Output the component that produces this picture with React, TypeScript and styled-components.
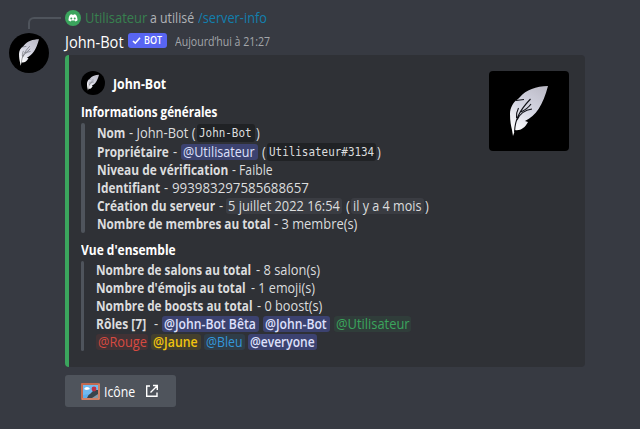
import React from 'react';
import styled, { createGlobalStyle, css } from 'styled-components';

const Global = createGlobalStyle`
  body {
    margin: 0;
    background: #373a42;
    font-family: "Open Sans", "Noto Sans", sans-serif;
    color: #dcddde;
  }
`;

/* A stretch of text: w is its width in the line, s narrows the letters (percent). */
const RunBox = styled.span<{ $w: number; $gap: number }>`
  flex: none;
  width: ${p => p.$w}px;
  margin-right: ${p => p.$gap}px;
  white-space: nowrap;
`;
const Narrow = styled.span<{ $s: number }>`
  display: inline-block;
  transform: scaleX(${p => p.$s / 100});
  transform-origin: 0 50%;
`;
type RunProps = { w: number; s?: number; gap?: number; className?: string; children?: React.ReactNode };
const Run = ({ w, s = 92, gap = 0, className, children }: RunProps) => (
  <RunBox className={className} $w={w} $gap={gap}>
    <Narrow $s={s}>{children}</Narrow>
  </RunBox>
);
const Strong = styled(Run)`
  font-weight: 700;
`;

const Page = styled.main`
  box-sizing: border-box;
  width: 640px;
  height: 429px;
  padding: 9px 0 0 9px;
  display: grid;
  grid-template-columns: 40px 520px;
  grid-template-rows: 20px 26px auto auto;
  column-gap: 16px;
  align-content: start;
  overflow: hidden;
`;

const Spine = styled.div`
  box-sizing: border-box;
  width: 33px;
  height: 12px;
  margin: 8px 0 0 19px;
  border: 2px solid #4f545c;
  border-width: 2px 0 0 2px;
  border-top-left-radius: 6px;
`;

const Reply = styled.div`
  display: flex;
  align-items: center;
  height: 18px;
  font-size: 14px;
  line-height: 18px;
  color: #b0b3b7;
`;
const ReplyIcon = styled.svg`
  width: 16px;
  height: 16px;
  margin-right: 4px;
`;
const ReplyUser = styled(Run)`
  color: #37804f;
`;
const Command = styled(Run)`
  color: #127fae;
`;

const Avatar = styled.svg<{ $size: number; $round?: boolean }>`
  display: block;
  flex: none;
  width: ${p => p.$size}px;
  height: ${p => p.$size}px;
  border-radius: ${p => (p.$round ? '50%' : '4px')};
  background: #000;
`;
const AvatarCell = styled.div`
  grid-row: 2 / 4;
  padding-top: 4px;
`;

const Header = styled.div`
  display: flex;
  align-items: center;
  height: 26px;
  line-height: 24px;
`;
const Author = styled(Run)`
  font-size: 16px;
  font-weight: 500;
  color: #fff;
`;
const Badge = styled.span`
  display: flex;
  align-items: center;
  box-sizing: border-box;
  width: 39px;
  height: 15px;
  margin: -3px 8px 0 0;
  padding-left: 4px;
  border-radius: 3px;
  background: #5865f2;
  color: #fff;
  font-size: 10px;
  font-weight: 600;
  line-height: 15px;
`;
const Tick = styled.svg`
  width: 9px;
  height: 9px;
  margin-right: 3px;
`;
const Time = styled(Run)`
  font-size: 12px;
  line-height: 26px;
  color: #a3a6aa;
`;

const Embed = styled.article`
  grid-column: 2;
  box-sizing: border-box;
  display: flex;
  justify-content: space-between;
  height: 312px;
  padding: 16px 16px 0 12px;
  border-left: 4px solid #3ba55d;
  border-radius: 4px;
  background: #2f3136;
  font-size: 14px;
`;
const Body = styled.div`
  display: flex;
  flex-direction: column;
`;
const EmbedAuthor = styled.div`
  display: flex;
  align-items: center;
  gap: 8px;
  height: 24px;
  margin-bottom: 8px;
  color: #fff;
`;
const Section = styled.section<{ $top?: number }>`
  margin-top: ${p => p.$top ?? 0}px;
`;
const Heading = styled.h3`
  margin: 0 0 2px;
  height: 18px;
  display: flex;
  font-size: 14px;
  line-height: 18px;
  color: #fff;
`;
const Quote = styled.div<{ $bar: number; $pad: number }>`
  display: grid;
  grid-template-columns: ${p => p.$bar}px auto;
  column-gap: ${p => p.$pad}px;
  &::before {
    content: '';
    border-radius: 4px;
    background: #4f545c;
  }
`;
const Lines = styled.div`
  display: flex;
  flex-direction: column;
`;
const Line = styled.div<{ $h?: number }>`
  display: flex;
  align-items: center;
  height: ${p => p.$h ?? 18}px;
  line-height: 18px;
`;

const chip = css`
  box-sizing: border-box;
  height: 16px;
  line-height: 16px;
  border-radius: 3px;
  padding-left: 2px;
`;
const Code = styled(Run)`
  ${chip}
  height: 18px;
  line-height: 18px;
  background: #202225;
  font-family: "DejaVu Sans Mono", monospace;
  font-size: 12px;
`;
const Stamp = styled(Run)`
  ${chip}
  background: #3a3c42;
`;
const tones = {
  blurple: ['#3c4270', '#dee0fc', 500],
  green: ['#303d3a', '#3ba55d', 400],
  red: ['#413235', '#d84a41', 400],
  yellow: ['#433f2e', '#f1c40f', 600],
  blue: ['#2f3d48', '#3498db', 500],
} as const;
const Mention = styled(Run)<{ $tone: keyof typeof tones; $bold?: boolean }>`
  ${chip}
  background: ${p => tones[p.$tone][0]};
  color: ${p => tones[p.$tone][1]};
  font-weight: ${p => (p.$bold ? 650 : tones[p.$tone][2])};
`;

const Button = styled.button`
  grid-column: 2;
  display: flex;
  align-items: center;
  box-sizing: border-box;
  width: 111px;
  height: 32px;
  margin-top: 8px;
  padding: 0 0 0 16px;
  border: 0;
  border-radius: 3px;
  background: #4f545c;
  color: #fff;
  font: 500 14px "Open Sans", sans-serif;
  text-align: left;
`;
const Emoji = styled.svg`
  width: 19px;
  height: 17px;
  margin-right: 4px;
`;
const External = styled.svg`
  width: 14px;
  height: 14px;
`;

const Feather = ({ size, round }: { size: number; round?: boolean }) => (
  <Avatar $size={size} $round={round} viewBox={round ? '2 3 76 76' : '0 0 80 80'}>
    <defs>
      <linearGradient id={`vane${size}`} x1="0.8" y1="0" x2="0.3" y2="1">
        <stop offset="0" stopColor="#bdbcc8" />
        <stop offset="0.5" stopColor="#d5d6e3" />
        <stop offset="1" stopColor="#fff" />
      </linearGradient>
    </defs>
    <path
      fill={`url(#vane${size})`}
      d="M59 15C47 15 37 19 31 26L29 28C24 31 21 37 21 43C21 50 22 55 23 59L24 65L26 59C31 60 36 57 39 51L36 50C47 45 54 34 59 15Z"
    />
    <path
      fill="none"
      stroke="#111218"
      strokeWidth={round ? 0.7 : 1.1}
      d="M25.5 61C26 48 31 39 41.5 28M27.5 47C27 43 28 40 29.5 37M28 49C31 42 36 39 43 38M32 41C36 39 40 36 42 33M27 29.5L35 28.5"
    />
  </Avatar>
);

export default function App() {
  return (
    <>
      <Global />
      <Page>
        <Spine />
        <Reply>
          <ReplyIcon viewBox="0 0 16 16">
            <circle cx="8" cy="8" r="8" fill="#3ba55d" />
            <path
              fill="#fff"
              d="M5 4.8Q6 4.2 6.8 4.2L7.1 4.8H8.9L9.2 4.2Q10.2 4.3 11 4.8Q12.7 7.2 12.6 10.3Q11.6 11.3 10.4 11.5L9.7 10.6H6.3L5.6 11.5Q4.4 11.3 3.4 10.3Q3.3 7.2 5 4.8Z"
            />
            <circle cx="6.3" cy="8.4" r="1" fill="#3ba55d" />
            <circle cx="9.7" cy="8.4" r="1" fill="#3ba55d" />
          </ReplyIcon>
          <ReplyUser w={61} gap={4} s={92.5}>Utilisateur</ReplyUser>
          <Run w={44} gap={4} s={88}>a utilisé</Run>
          <Command w={69} s={91}>/server-info</Command>
        </Reply>

        <AvatarCell><Feather size={40} round /></AvatarCell>
        <Header>
          <Author w={59} gap={4} s={91}>John-Bot</Author>
          <Badge>
            <Tick viewBox="0 0 9 9"><path d="M1 5L3.3 7.2L8 1.8" fill="none" stroke="#fff" strokeWidth="1.6" /></Tick>
            <Run w={19} s={90}>BOT</Run>
          </Badge>
          <Time w={96} s={88}>Aujourd’hui à 21:27</Time>
        </Header>

        <Embed>
          <Body>
            <EmbedAuthor>
              <Feather size={24} round />
              <Strong w={53} s={88}>John-Bot</Strong>
            </EmbedAuthor>
            <Section>
              <Heading><Strong w={137} s={83.5}>Informations générales</Strong></Heading>
              <Quote $bar={4} $pad={12}>
                <Lines>
                  <Line $h={19}>
                    <Strong w={28} gap={4} s={84}>Nom</Strong>
                    <Run w={68} s={92}>- John-Bot (</Run>
                    <Code w={58} gap={1} s={91}>John-Bot</Code>
                    <Run w={5}>)</Run>
                  </Line>
                  <Line $h={19}>
                    <Strong w={72} gap={4} s={84.5}>Propriétaire</Strong>
                    <Run w={8}>-</Run>
                    <Mention $tone="blurple" w={77} gap={4} s={89.5}>@Utilisateur</Mention>
                    <Run w={5}>(</Run>
                    <Code w={109} gap={1} s={91}>Utilisateur#3134</Code>
                    <Run w={5}>)</Run>
                  </Line>
                  <Line>
                    <Strong w={131} gap={4} s={85}>Niveau de vérification</Strong>
                    <Run w={42} s={87}>- Faible</Run>
                  </Line>
                  <Line>
                    <Strong w={63} gap={4} s={84.5}>Identifiant</Strong>
                    <Run w={8}>-</Run>
                    <Run w={138} s={95}>993983297585688657</Run>
                  </Line>
                  <Line>
                    <Strong w={118} gap={4} s={85}>Création du serveur</Strong>
                    <Run w={7}>-</Run>
                    <Stamp w={116} gap={4} s={91.5}>5 juillet 2022 16:54</Stamp>
                    <Run w={5}>(</Run>
                    <Stamp w={73} gap={1} s={90}>il y a 4 mois</Stamp>
                    <Run w={5}>)</Run>
                  </Line>
                  <Line>
                    <Strong w={173} gap={4} s={84}>Nombre de membres au total</Strong>
                    <Run w={84} s={92}>- 3 membre(s)</Run>
                  </Line>
                </Lines>
              </Quote>
            </Section>
            <Section $top={8}>
              <Heading><Strong w={96} s={85.5}>Vue d'ensemble</Strong></Heading>
              <Quote $bar={3} $pad={12}>
                <Lines>
                  <Line>
                    <Strong w={156} gap={4} s={84}>Nombre de salons au total</Strong>
                    <Run w={66} s={92}>- 8 salon(s)</Run>
                  </Line>
                  <Line>
                    <Strong w={151} gap={4} s={84}>Nombre d'émojis au total</Strong>
                    <Run w={66} s={90}>- 1 emoji(s)</Run>
                  </Line>
                  <Line>
                    <Strong w={157} gap={4} s={84}>Nombre de boosts au total</Strong>
                    <Run w={70} s={91}>- 0 boost(s)</Run>
                  </Line>
                  <Line>
                    <Strong w={54} gap={4} s={86}>Rôles [7]</Strong>
                    <Run w={8}>-</Run>
                    <Mention $tone="blurple" $bold w={97} gap={4} s={87}>@John-Bot Bêta</Mention>
                    <Mention $tone="blurple" $bold w={67} gap={4} s={87}>@John-Bot</Mention>
                    <Mention $tone="green" w={77} s={92}>@Utilisateur</Mention>
                  </Line>
                  <Line>
                    <Mention $tone="red" w={52} gap={3} s={91}>@Rouge</Mention>
                    <Mention $tone="yellow" w={50} gap={3} s={88}>@Jaune</Mention>
                    <Mention $tone="blue" w={41} gap={3} s={88}>@Bleu</Mention>
                    <Mention $tone="blurple" $bold w={69} s={86}>@everyone</Mention>
                  </Line>
                </Lines>
              </Quote>
            </Section>
          </Body>
          <Feather size={80} />
        </Embed>

        <Button>
          <Emoji viewBox="0 0 19 17">
            <rect width="19" height="17" rx="1" fill="#c1694f" />
            <rect x="2" y="2" width="15" height="13" fill="#70b9f0" />
            <path d="M3 6Q4 4 6 4Q8 4 9 6Q7 7 5 7Z" fill="#fff" />
            <path d="M2 15L9 11L13 7L17 7V15Z" fill="#3a454c" />
            <path d="M2 12L8 11L6 15H2Z" fill="#5dadec" />
            <circle cx="13" cy="6" r="2.4" fill="#be3146" />
            <path d="M11 15L17 11V15Z" fill="#8899a6" />
            <path d="M1 16H18V1" fill="none" stroke="#dd997f" strokeWidth="1" />
          </Emoji>
          <Run w={32} gap={9} s={88}>Icône</Run>
          <External viewBox="0 0 14 14">
            <path
              fill="none"
              stroke="#fff"
              strokeWidth="1.4"
              d="M5 2H1.7V12.3H12V8.5M8 1.5H12.3V6M12 2L5.5 8.5"
            />
          </External>
        </Button>
      </Page>
    </>
  );
}
